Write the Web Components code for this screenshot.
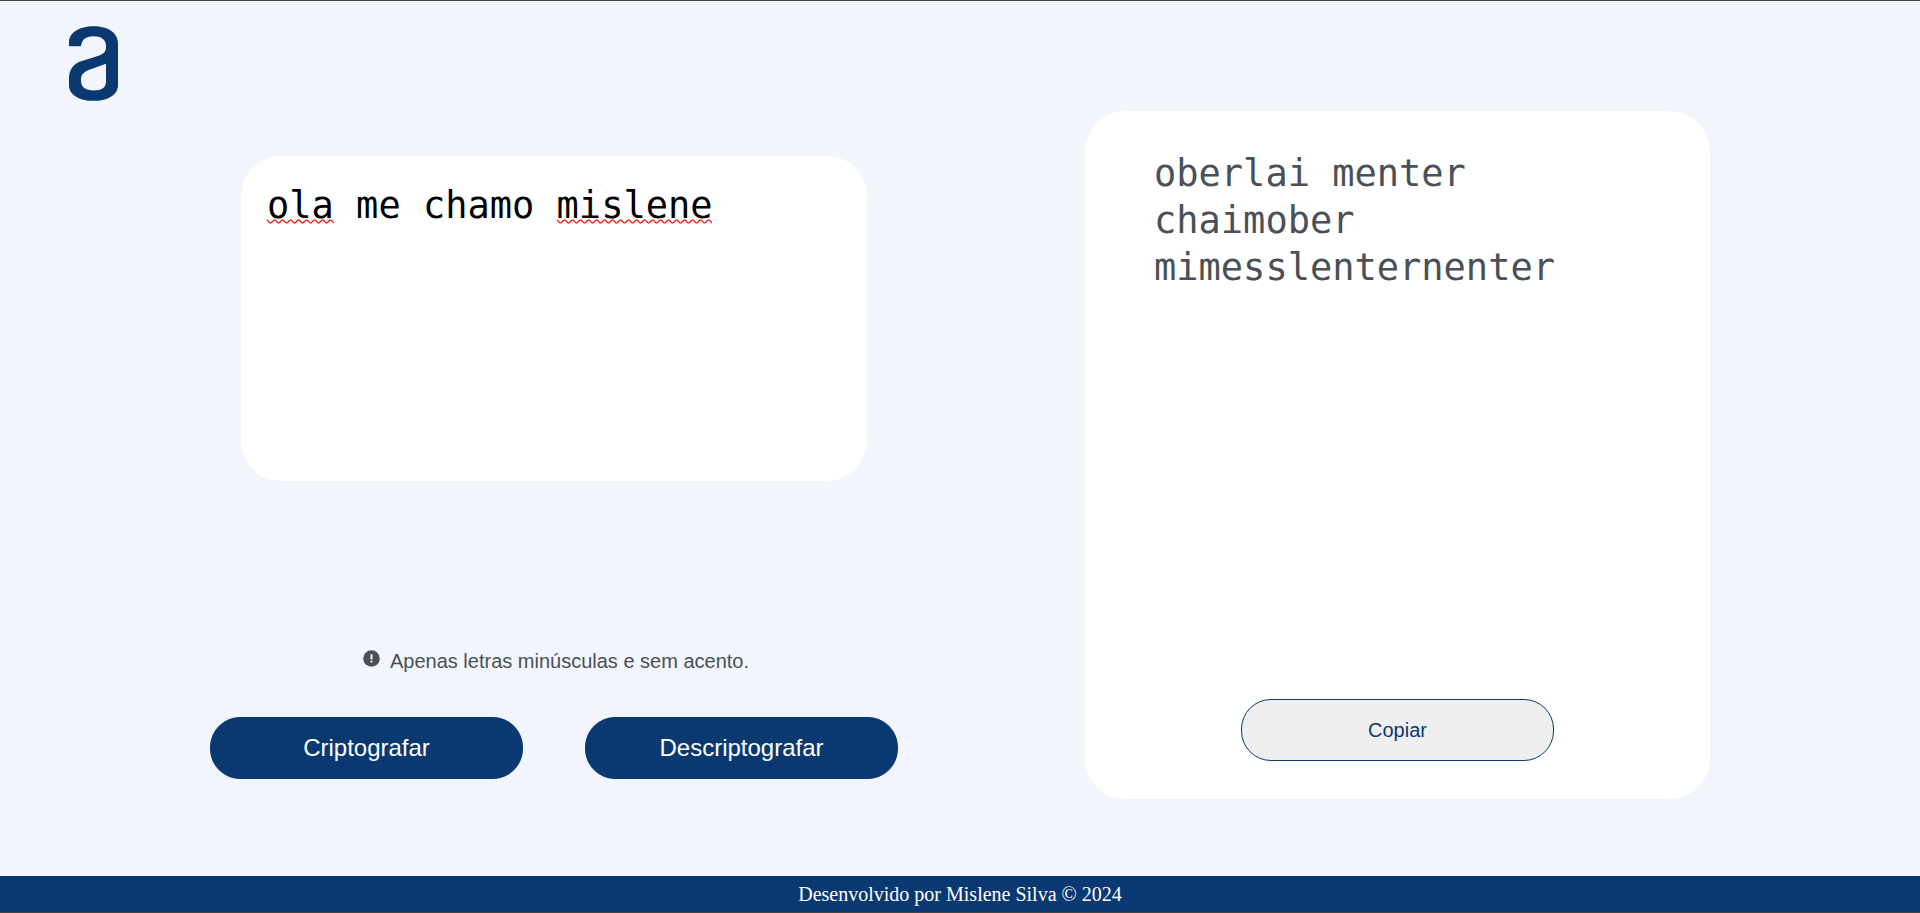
<!DOCTYPE html>
<html lang="pt-BR">
<head>
<meta charset="utf-8">
<meta name="viewport" content="width=device-width, initial-scale=1">
<title>Decodificador de texto</title>
<style>
  :root {
    --navy: #0a3871;
    --page: #f3f5fc;
    --grey: #495057;
    --mono: "DejaVu Sans Mono", monospace;
    --sans: "Liberation Sans", Arial, sans-serif;
  }
  body { margin: 0; background: var(--page); }
</style>
</head>
<body>
<codec-app></codec-app>

<script>
const define = (name, html, setup) => {
  const template = document.createElement('template');
  template.innerHTML = html;
  customElements.define(name, class extends HTMLElement {
    constructor() {
      super();
      this.attachShadow({ mode: 'open' }).append(template.content.cloneNode(true));
      if (setup) setup(this, this.shadowRoot);
    }
  });
};

define('brand-logo', `
  <style>
    :host { display: block; width: 49px; height: 75px; }
    svg { display: block; width: 100%; height: 100%; fill: var(--navy); }
  </style>
  <svg viewBox="207 78 147 224" role="img" aria-label="Logo">
    <path fill-rule="evenodd" d="M207 138V126C207 97 238 78 281 78C324 78 354 97 354 130V255C354 283 325 302 281 302C237 302 207 283 207 255V230C209 208 220 192 241 184L298 166C311 161 318 154 318 142V136C318 118 303 108 281 108C256 108 245 118 243 138ZM318 191L268 209C252 215 243 225 243 236V242C243 262 257 271 281 271C306 271 318 262 318 244Z"/>
  </svg>`);

define('spell-mark', `
  <style>
    :host { display: block; height: 5px; }
    svg { display: block; width: 100%; height: 5px; }
  </style>
  <svg aria-hidden="true">
    <defs>
      <pattern id="wave" width="8" height="5" patternUnits="userSpaceOnUse">
        <path d="M-1 0L0 1L3 4L4 4L7 1L8 1L9 2" fill="none" stroke="#f00" stroke-width="1.2"/>
      </pattern>
    </defs>
    <rect width="100%" height="5" fill="url(#wave)"/>
  </svg>`);

define('text-entry', `
  <style>
    :host { display: block; position: relative; font: 37px/47px var(--mono); }
    textarea {
      display: block; box-sizing: border-box; width: 100%; height: 325px;
      padding: 26px; border: 0; border-radius: 40px; outline: 0; resize: none;
      background: #fff; color: #000; font: inherit;
    }
    .marks {
      position: absolute; inset: 63px 26px auto; display: flex;
      pointer-events: none;
    }
    .short { width: 3ch; }
    .long { width: 7ch; margin-left: 10ch; }
  </style>
  <textarea aria-label="Digite seu texto" spellcheck="false">ola me chamo mislene</textarea>
  <div class="marks"><spell-mark class="short"></spell-mark><spell-mark class="long"></spell-mark></div>`,
  (host, root) => {
    root.querySelector('textarea').addEventListener('input', () => {
      root.querySelector('.marks').style.display = 'none';
    });
  });

define('info-note', `
  <style>
    :host {
      display: flex; align-items: center; justify-content: center; gap: 10px;
      padding-left: 4px; color: var(--grey); font: 20px/24px var(--sans);
    }
    svg { width: 17px; height: 17px; margin-bottom: 6px; }
    p { margin: 0; }
  </style>
  <svg viewBox="0 0 17 17" aria-hidden="true">
    <circle cx="8.5" cy="8.5" r="8.3" fill="#495057"/>
    <path d="M7.5 4.2H9.5V9.4H7.5ZM7.5 10.8H9.5V12.6H7.5Z" fill="#f3f5fc"/>
  </svg>
  <p><slot></slot></p>`);

define('pill-button', `
  <style>
    :host { display: block; flex: 0 1 313px; min-width: 0; }
    button {
      display: block; box-sizing: border-box; width: 100%; height: 62px;
      border: 1px solid var(--navy); border-radius: 30px; padding: 0;
      background: var(--navy); color: #fff; font: 24px/28px var(--sans); cursor: pointer;
    }
    :host([outline]) button { background: #efefef; color: var(--navy); font-size: 20px; }
  </style>
  <button type="button"><slot></slot></button>`);

define('result-card', `
  <style>
    :host {
      display: flex; flex-direction: column; justify-content: space-between;
      box-sizing: border-box; min-height: 688px; padding: 39px 69px 38px;
      border-radius: 40px; background: #fff;
    }
    p { margin: 0; color: var(--grey); font: 37px/47px var(--mono); overflow-wrap: anywhere; }
    .actions { display: flex; justify-content: center; }
  </style>
  <p><slot></slot></p>
  <div class="actions"><slot name="action"></slot></div>`);

define('page-footer', `
  <style>
    :host { display: block; border-bottom: 1px solid #444; background: var(--navy); }
    footer {
      padding: 6px 16px; color: #fff; text-align: center;
      font: 20px/24px "Liberation Serif", "Times New Roman", serif;
    }
  </style>
  <footer><slot></slot></footer>`);

define('codec-app', `
  <style>
    :host {
      display: flex; flex-direction: column; box-sizing: border-box;
      min-height: 100vh; border-top: 1px solid #444;
    }
    header { padding: 25px 69px 10px; }
    main {
      display: grid; grid-template-columns: minmax(0, 688px) minmax(0, 625px);
      justify-content: space-between; column-gap: 32px;
      width: min(1500px, 100% - 64px); margin: 0 auto 32px;
    }
    .entry { display: flex; flex-direction: column; padding: 45px 0 20px; }
    text-entry { width: 100%; max-width: 626px; align-self: center; }
    info-note { margin: auto 0 44px; }
    .buttons { display: flex; justify-content: center; gap: 62px; }
    page-footer { margin-top: auto; }
    @media (max-width: 1000px) {
      main { grid-template-columns: minmax(0, 688px); justify-content: center; row-gap: 32px; }
      info-note { margin-top: 32px; }
      .buttons { gap: 24px; }
    }
  </style>
  <header><brand-logo></brand-logo></header>
  <main>
    <section class="entry">
      <text-entry></text-entry>
      <info-note>Apenas letras minúsculas e sem acento.</info-note>
      <div class="buttons">
        <pill-button>Criptografar</pill-button>
        <pill-button>Descriptografar</pill-button>
      </div>
    </section>
    <result-card>oberlai menter chaimober mimesslenternenter<pill-button slot="action" outline>Copiar</pill-button></result-card>
  </main>
  <page-footer>Desenvolvido por Mislene Silva © 2024</page-footer>`);
</script>
</body>
</html>
